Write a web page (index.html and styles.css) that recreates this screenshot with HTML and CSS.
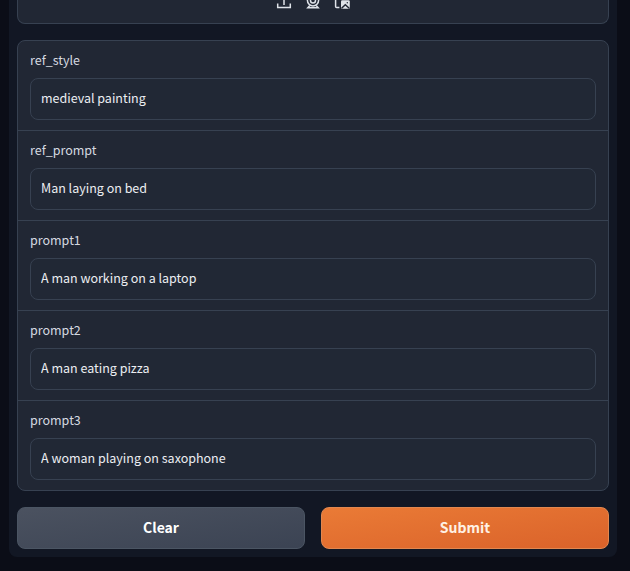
FILE: index.html
```html
<!DOCTYPE html>
<html lang="en">
<head>
<meta charset="utf-8">
<title>Prompt form</title>
<link rel="stylesheet" href="styles.css">
</head>
<body>
<main class="panel">
  <section class="upload">
    <svg class="icon" viewBox="0 0 16 16"><path d="M1.7 9.5v4.1h12.6V9.5M8 11V1M4 5l4-4 4 4"/></svg>
    <svg class="icon" viewBox="0 0 16 16"><circle cx="8" cy="6.3" r="5.6"/><circle cx="8" cy="6.5" r="2.5"/><path d="M4.8 11.5l-2 2.3h10.4l-2-2.3"/></svg>
    <svg class="icon" viewBox="0 0 16 16"><path d="M5.4 13.6H2.6a1 1 0 0 1-1-1V2h10v3"/><rect class="solid" x="7" y="6.3" width="8.8" height="8.4" rx="1.2"/><path class="cut" d="M7.6 14.2l3.7-3.4 3.9 3.4"/><circle class="hole" cx="13.3" cy="8.8" r=".7"/></svg>
  </section>
  <form class="form">
    <div class="field"><label for="style">ref_style</label><input id="style" value="medieval painting"></div>
    <div class="field"><label for="ref">ref_prompt</label><input id="ref" value="Man laying on bed"></div>
    <div class="field"><label for="p1">prompt1</label><input id="p1" value="A man working on a laptop"></div>
    <div class="field"><label for="p2">prompt2</label><input id="p2" value="A man eating pizza"></div>
    <div class="field"><label for="p3">prompt3</label><input id="p3" value="A woman playing on saxophone"></div>
  </form>
  <div class="actions">
    <button class="button secondary" type="button">Clear</button>
    <button class="button primary" type="button">Submit</button>
  </div>
</main>
</body>
</html>
```
FILE: styles.css
```css
* { box-sizing: border-box; }
body {
  margin: 0;
  height: 571px;
  overflow: hidden;
  background: #0b0d17;
  font-family: "Noto Sans CJK SC", "Noto Sans", sans-serif;
}
.panel {
  width: 608px;
  height: 557px;
  margin-left: 9px;
  padding: 0 8px 8px;
  display: flex;
  flex-direction: column;
  gap: 16px;
  background: #121724;
  border-radius: 0 0 8px 8px;
}
.upload {
  height: 24px;
  display: flex;
  justify-content: center;
  gap: 13px;
  background: #212734;
  border: 1px solid #374151;
  border-top: 0;
  border-radius: 0 0 8px 8px;
}
.icon {
  width: 16px;
  height: 16px;
  margin-top: -6px;
  fill: none;
  stroke: #dfe3e9;
  stroke-width: 1.5;
}
.icon .solid { fill: #dfe3e9; stroke: none; }
.icon .cut { stroke: #212734; }
.icon .hole { fill: #212734; stroke: none; }
.form {
  height: 451px;
  margin: 0;
  background: #212734;
  border: 1px solid #374151;
  border-radius: 8px;
}
.field {
  height: 90px;
  padding: 9px 12px 10px;
  border-bottom: 1px solid #374151;
}
.field:last-child { border-bottom: 0; }
label {
  display: block;
  height: 20px;
  margin-bottom: 8px;
  font-size: 12.5px;
  line-height: 20px;
  color: #d5d9e0;
}
input {
  display: block;
  width: 100%;
  height: 42px;
  padding: 0 10px 3px;
  background: #212835;
  border: 1px solid #374151;
  border-radius: 8px;
  font: 12.5px "Noto Sans CJK SC", "Noto Sans", sans-serif;
  color: #eceef2;
  outline: none;
}
.actions {
  display: flex;
  gap: 16px;
}
.button {
  flex: 1;
  height: 42px;
  padding: 0 0 3px;
  border: 1px solid;
  border-radius: 8px;
  font: 600 14px "Noto Sans CJK SC", "Noto Sans", sans-serif;
  color: #fff;
}
.secondary {
  background: linear-gradient(to bottom right, #4b5260, #3b4353) border-box;
  border-color: #4b5563;
}
.primary {
  background: linear-gradient(to bottom right, #ea7b36, #da622a) border-box;
  border-color: #e2874f;
  color: #fff1e4;
}
```
